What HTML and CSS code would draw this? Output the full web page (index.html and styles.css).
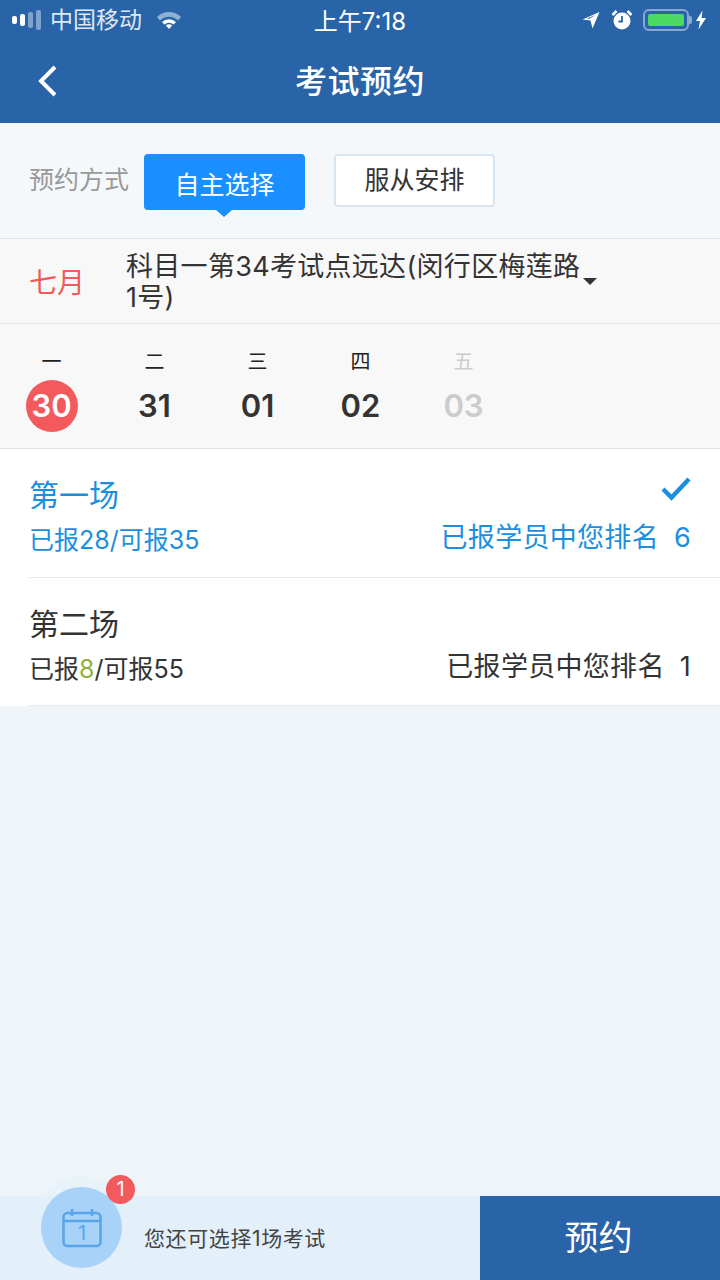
FILE: index.html
```html
<!DOCTYPE html>
<html lang="zh-CN">
<head>
  <meta charset="UTF-8">
  <meta name="viewport" content="width=device-width, initial-scale=1">
  <title>考试预约</title>
  <link rel="stylesheet" href="styles.css">
</head>
<body>
  <div class="page">
    <header class="topbar">
      <div class="status">
        <div class="status-left">
          <span class="signal"><i class="on"></i><i class="on"></i><i></i><i></i></span>
          <span class="carrier">中国移动</span>
          <svg class="wifi" width="26" height="18" viewBox="0 0 26 18">
            <path d="M1 6 A17 17 0 0 1 25 6 L22 9.5 A12.5 12.5 0 0 0 4 9.5 Z" fill="#8fb0d6"/>
            <path d="M6 11 A10 10 0 0 1 20 11 L17.6 13.6 A6.5 6.5 0 0 0 8.4 13.6 Z" fill="#fff"/>
            <path d="M9.8 14.6 A4.5 4.5 0 0 1 16.2 14.6 L13 18 Z" fill="#fff"/>
          </svg>
        </div>
        <div class="status-time">上午7:18</div>
        <div class="status-right">
          <svg width="20" height="20" viewBox="0 0 20 20">
            <path d="M18.5 2 L1.5 9.5 L9.5 10.5 L11.5 18.5 Z M14.5 5 L8.5 8.8 L5.5 8.7 Z" fill="#fff" fill-rule="evenodd"/>
          </svg>
          <svg class="alarm" width="22" height="22" viewBox="0 0 22 22">
            <circle cx="11" cy="12" r="8.5" fill="#fff"/>
            <path d="M11 7 V12.5 H7.5" fill="none" stroke="#2a64a8" stroke-width="1.8"/>
            <path d="M1.5 6 L5.5 2 M20.5 6 L16.5 2" stroke="#fff" stroke-width="2.6"/>
          </svg>
          <span class="battery"><span class="battery-fill"></span></span>
          <span class="battery-tip"></span>
          <svg width="12" height="20" viewBox="0 0 12 20">
            <path d="M7.5 0.5 L1 11 H5 L3.5 19.5 L11 8 H6.5 Z" fill="#fff"/>
          </svg>
        </div>
      </div>
      <div class="navbar">
        <svg class="back" width="24" height="36" viewBox="0 0 24 36">
          <path d="M19 4 L5 18 L19 32" fill="none" stroke="#fff" stroke-width="4"/>
        </svg>
        <h1>考试预约</h1>
      </div>
    </header>

    <section class="mode">
      <span class="mode-label">预约方式</span>
      <button class="mode-btn active">自主选择</button>
      <button class="mode-btn">服从安排</button>
    </section>

    <section class="place">
      <div class="month">七月</div>
      <div class="place-name">科目一第34考试点远达(闵行区梅莲路1号)</div>
      <span class="caret"></span>
    </section>

    <section class="days">
      <div class="day"><span class="week">一</span><span class="date today">30</span></div>
      <div class="day"><span class="week">二</span><span class="date">31</span></div>
      <div class="day"><span class="week">三</span><span class="date">01</span></div>
      <div class="day"><span class="week">四</span><span class="date">02</span></div>
      <div class="day off"><span class="week">五</span><span class="date">03</span></div>
    </section>

    <section class="sessions">
      <div class="session selected">
        <div class="session-row title-row">
          <span class="session-name">第一场</span>
          <svg class="check" width="32" height="28" viewBox="0 0 32 28">
            <path d="M3 14 L11.5 22.5 L29 4" fill="none" stroke="#1a8fe0" stroke-width="4.4"/>
          </svg>
        </div>
        <div class="session-row">
          <span>已报28/可报35</span>
          <span class="rank">已报学员中您排名<b>6</b></span>
        </div>
      </div>
      <div class="session">
        <div class="session-row title-row">
          <span class="session-name">第二场</span>
        </div>
        <div class="session-row">
          <span>已报<em>8</em>/可报55</span>
          <span class="rank">已报学员中您排名<b>1</b></span>
        </div>
      </div>
    </section>

    <div class="spacer"></div>

    <footer class="bottom">
      <div class="cart">
        <div class="cart-ring">
          <div class="cart-circle">
            <svg width="42" height="42" viewBox="0 0 42 42">
              <rect x="2.5" y="6" width="37" height="33" rx="4" fill="none" stroke="#5aa5ea" stroke-width="2.6"/>
              <path d="M2.5 14 H39.5 M11 2 V9 M31 2 V9" fill="none" stroke="#5aa5ea" stroke-width="2.6"/>
              <text x="21" y="33" text-anchor="middle" class="cal-num">1</text>
            </svg>
          </div>
        </div>
        <span class="badge">1</span>
        <span class="cart-text">您还可选择1场考试</span>
      </div>
      <button class="submit">预约</button>
    </footer>
  </div>
</body>
</html>
```
FILE: styles.css
```css
* {
  box-sizing: border-box;
}
html, body {
  margin: 0;
  padding: 0;
}
body {
  font-family: "Inter", "Noto Sans CJK SC", sans-serif;
  color: #333;
  background: #eff4f8;
}
button {
  font-family: inherit;
  padding: 0;
  border: none;
}
.page {
  display: flex;
  flex-direction: column;
  width: 720px;
  height: 1280px;
  overflow: hidden;
}

/* 顶部 */
.topbar {
  height: 123px;
  background: #2a64a8;
  color: #fff;
}
.status {
  display: flex;
  align-items: center;
  justify-content: space-between;
  height: 40px;
  padding: 0 12px;
  font-size: 23px;
  position: relative;
}
.status-left {
  display: flex;
  align-items: center;
  color: #dfe8f3;
}
.carrier {
  margin: -4px 0 0 1px;
}
.signal {
  display: flex;
  align-items: center;
  gap: 3px;
  margin-right: 8px;
}
.signal i {
  width: 5px;
  background: #7fa3cc;
  border-radius: 2px;
}
.signal i.on {
  background: #fff;
}
.signal i:nth-child(1) { height: 8px; }
.signal i:nth-child(2) { height: 12px; }
.signal i:nth-child(3) { height: 16px; }
.signal i:nth-child(4) { height: 20px; }
.wifi {
  margin-left: 14px;
}
.status-time {
  position: absolute;
  left: 0;
  right: 0;
  top: 2px;
  text-align: center;
  font-size: 24px;
}
.status-right {
  display: flex;
  align-items: center;
  padding-right: 1px;
}
.alarm {
  margin-left: 10px;
}
.battery {
  width: 46px;
  height: 22px;
  margin-left: 10px;
  padding: 3px;
  border: 2px solid #86a9d2;
  border-radius: 6px;
}
.battery-fill {
  display: block;
  height: 100%;
  background: #4cd964;
  border-radius: 2px;
}
.battery-tip {
  width: 3px;
  height: 8px;
  margin-right: 3px;
  background: #86a9d2;
  border-radius: 0 2px 2px 0;
}
.navbar {
  height: 83px;
  display: flex;
  align-items: center;
  justify-content: center;
  position: relative;
}
.navbar h1 {
  margin: -6px 0 0 0;
  font-size: 32px;
  font-weight: 500;
  letter-spacing: 0.5px;
}
.back {
  position: absolute;
  left: 36px;
  top: 23px;
}

/* 预约方式 */
.mode {
  display: flex;
  align-items: flex-start;
  height: 116px;
  padding: 31px 0 0 29px;
  background: #f5f8fb;
  border-bottom: 1px solid #dfe4e9;
}
.mode-label {
  width: 115px;
  margin-top: 7px;
  font-size: 25px;
  line-height: 38px;
  color: #999;
}
.mode-btn {
  width: 161px;
  height: 53px;
  margin-right: 29px;
  padding-bottom: 6px;
  border-radius: 4px;
  font-size: 25px;
  color: #333;
  background: #fff;
  border: 2px solid #d8e6f2;
}
.mode-btn.active {
  height: 56px;
  padding: 1px 0 0 0;
  position: relative;
  color: #fff;
  background: #1a8fff;
  border: none;
}
.mode-btn.active::after {
  content: "";
  position: absolute;
  left: 72px;
  bottom: -7px;
  border-left: 8px solid transparent;
  border-right: 8px solid transparent;
  border-top: 7px solid #1a8fff;
}

/* 考点 */
.place {
  display: flex;
  align-items: center;
  height: 85px;
  padding-left: 29px;
  background: #f8f8f8;
  border-bottom: 1px solid #e3e3e3;
}
.month {
  width: 97px;
  margin-top: -1px;
  font-size: 28px;
  color: #ef5a5a;
}
.place-name {
  width: 457px;
  margin-top: 1px;
  font-size: 27px;
  letter-spacing: 0.3px;
  line-height: 31px;
  color: #333;
}
.caret {
  border-left: 7px solid transparent;
  border-right: 7px solid transparent;
  border-top: 7px solid #333;
}

/* 日期 */
.days {
  display: flex;
  height: 125px;
  padding: 25px 0 0 0;
  background: #f8f8f8;
  border-bottom: 1px solid #e3e3e3;
}
.day {
  width: 103px;
  display: flex;
  flex-direction: column;
  align-items: center;
}
.week {
  margin-top: -1px;
  font-size: 20px;
  line-height: 28px;
  color: #222;
}
.date {
  width: 52px;
  height: 52px;
  margin-top: 4px;
  border-radius: 50%;
  text-align: center;
  font-size: 31px;
  font-weight: 600;
  line-height: 52px;
  color: #333;
}
.date.today {
  color: #fff;
  background: #f25a5e;
}
.day.off .week,
.day.off .date {
  color: #ccc;
}

/* 场次 */
.sessions {
  background: #fff;
}
.session {
  height: 129px;
  margin-left: 29px;
  padding: 22px 29px 0 0;
  border-bottom: 1px solid #e6e9ec;
  font-size: 25px;
  color: #333;
}
.session:last-child {
  height: 128px;
}
.session.selected {
  color: #1a8fe0;
}
.session-row {
  display: flex;
  align-items: center;
  justify-content: space-between;
  height: 36px;
}
.title-row {
  height: 44px;
  margin-bottom: 5px;
}
.session-name {
  font-size: 30px;
}
.check {
  margin: -9px -1px 0 0;
}
.rank {
  font-size: 27px;
  letter-spacing: 0.3px;
  margin-top: -5px;
}
.rank b {
  margin-left: 15px;
  font-weight: 400;
}
.session em {
  font-style: normal;
  color: #8db33a;
}
.spacer {
  flex: 1;
}

/* 底部 */
.bottom {
  display: flex;
  height: 84px;
  background: #e3f0fa;
}
.cart {
  flex: 1;
  display: flex;
  align-items: center;
  position: relative;
}
.cart-ring {
  position: absolute;
  left: 31px;
  top: -19px;
  width: 100px;
  height: 100px;
  padding: 10px;
  border-radius: 50%;
  background: rgba(227, 240, 250, 0.6);
}
.cart-circle {
  display: flex;
  align-items: center;
  justify-content: center;
  width: 81px;
  height: 81px;
  border-radius: 50%;
  background: #a9d2f8;
}
.cal-num {
  font-size: 20px;
  fill: #5aa5ea;
}
.badge {
  position: absolute;
  left: 106px;
  top: -21px;
  width: 29px;
  height: 29px;
  border-radius: 50%;
  text-align: center;
  font-size: 20px;
  line-height: 29px;
  color: #fff;
  background: #f25a5e;
}
.cart-text {
  margin: -3px 0 0 144px;
  font-size: 21px;
  letter-spacing: 0.6px;
  color: #444;
}
.submit {
  width: 240px;
  padding: 0 3px 5px 0;
  font-size: 34px;
  color: #fff;
  background: #2a64a8;
}
```
